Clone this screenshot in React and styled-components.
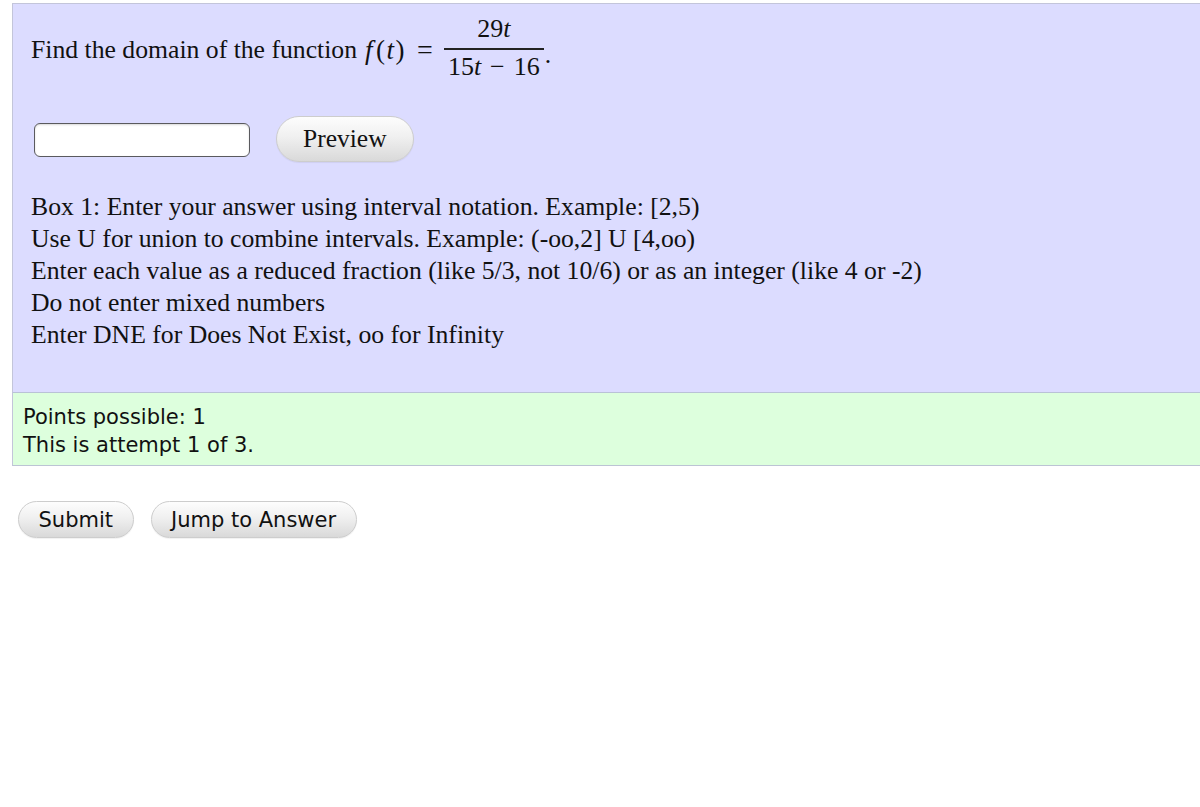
import React from "react";
import styled, { createGlobalStyle } from "styled-components";

const Global = createGlobalStyle`
  html, body { margin: 0; padding: 0; background: #ffffff; overflow: hidden; }
  body { width: 1200px; height: 807px; }
`;

const Page = styled.div`
  padding: 3px 0 0 12px;
  width: 1200px;
`;

const QuestionBox = styled.div`
  background: #dcdcff;
  border-top: 1px solid #c3c5da;
  border-left: 1px solid #c3c5da;
  height: 389px;
  padding: 0 0 0 18px;
  box-sizing: border-box;
  font-family: "Liberation Serif", "Times New Roman", serif;
  font-size: 25.7px;
  color: #111;
`;

const QuestionLine = styled.div`
  display: flex;
  align-items: center;
  height: 62px;
  margin-top: 15px;
  white-space: nowrap;
`;

const MathText = styled.span`
  margin-left: 8px;
  font-family: "Liberation Serif", serif;
  font-size: 27px;
  letter-spacing: 1.5px;
`;

const Ital = styled.i`
  font-style: italic;
  padding-right: ${(p) => p.$pr || 0}px;
`;

const Eq = styled.span`
  margin: 0 11px 0 11px;
  font-size: 28px;
`;

const Fraction = styled.span`
  display: inline-flex;
  flex-direction: column;
  align-items: center;
  font-size: 26px;
  margin-top: -4px;
`;

const Num = styled.span`
  line-height: 28px;
  padding: 0 4px 5px;
`;

const Bar = styled.span`
  align-self: stretch;
  height: 1.5px;
  background: #222;
`;

const Den = styled.span`
  line-height: 28px;
  padding: 3px 4px 0;
`;

const Minus = styled.span`
  margin: 0 9px;
`;

const Period = styled.span`
  align-self: center;
  margin-top: 10px;
  margin-left: 1px;
`;

const InputRow = styled.div`
  display: flex;
  align-items: center;
  gap: 26px;
  margin-top: 36px;
  padding-left: 3px;
  height: 46px;
`;

const AnswerInput = styled.input`
  width: 216px;
  height: 34px;
  box-sizing: border-box;
  border: 1.5px solid #5a5a5e;
  border-radius: 6px;
  background: #ffffff;
  box-shadow: inset 0 1px 2px rgba(0, 0, 0, 0.15);
  outline: none;
`;

const PillButton = styled.button`
  height: ${(p) => p.$h}px;
  padding: 0 ${(p) => p.$px}px;
  margin-top: ${(p) => p.$mt || 0}px;
  border-radius: 999px;
  border: 1px solid #cdcdcd;
  background: linear-gradient(#fdfdfd, #f0f0f0 45%, #d9d9d9);
  box-shadow: 0 1px 1px rgba(0, 0, 0, 0.06);
  font-family: ${(p) => (p.$serif ? '"Liberation Serif", serif' : '"DejaVu Sans", Verdana, sans-serif')};
  font-size: ${(p) => p.$fs}px;
  color: #111;
  cursor: pointer;
`;

const Instructions = styled.div`
  margin-top: 28px;
  line-height: 32px;
`;

const InfoBox = styled.div`
  background: #ddffdd;
  border-top: 1.5px solid #b9c2d6;
  border-left: 1px solid #c3c5da;
  border-bottom: 1.5px solid #bcc4d4;
  padding: 10px 0 6px 10px;
  font-family: "DejaVu Sans", Verdana, sans-serif;
  font-size: 21px;
  line-height: 28px;
  color: #111;
`;

const ButtonRow = styled.div`
  display: flex;
  gap: 17px;
  margin-top: 35px;
  margin-left: 6px;
`;

export default function App() {
  return (
    <>
      <Global />
      <Page>
        <QuestionBox>
          <QuestionLine>
            <span>Find the domain of the function</span>
            <MathText>
              <Ital $pr={2}>f</Ital>(<Ital>t</Ital>)
            </MathText>
            <Eq>=</Eq>
            <Fraction>
              <Num>
                29<Ital>t</Ital>
              </Num>
              <Bar />
              <Den>
                15<Ital>t</Ital>
                <Minus>−</Minus>16
              </Den>
            </Fraction>
            <Period>.</Period>
          </QuestionLine>
          <InputRow>
            <AnswerInput type="text" aria-label="Box 1" />
            <PillButton $serif $h={46} $px={26} $fs={25.5} $mt={-2}>
              Preview
            </PillButton>
          </InputRow>
          <Instructions>
            <div>Box 1: Enter your answer using interval notation. Example: [2,5)</div>
            <div>Use U for union to combine intervals. Example: (-oo,2] U [4,oo)</div>
            <div>Enter each value as a reduced fraction (like 5/3, not 10/6) or as an integer (like 4 or -2)</div>
            <div>Do not enter mixed numbers</div>
            <div>Enter DNE for Does Not Exist, oo for Infinity</div>
          </Instructions>
        </QuestionBox>
        <InfoBox>
          <div>Points possible: 1</div>
          <div>This is attempt 1 of 3.</div>
        </InfoBox>
        <ButtonRow>
          <PillButton $h={37} $px={19.5} $fs={21}>
            Submit
          </PillButton>
          <PillButton $h={37} $px={19.5} $fs={21}>
            Jump to Answer
          </PillButton>
        </ButtonRow>
      </Page>
    </>
  );
}
